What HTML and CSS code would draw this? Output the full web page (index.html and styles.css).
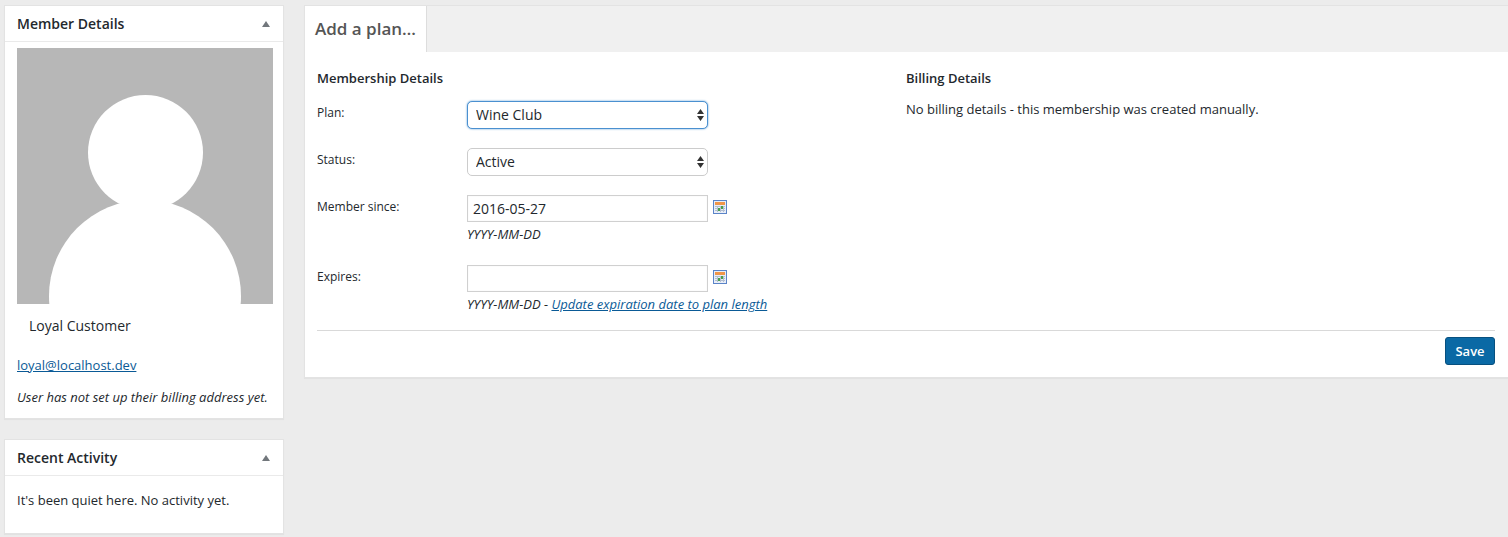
FILE: index.html
```html
<!DOCTYPE html>
<html lang="en">
<head>
<meta charset="utf-8">
<title>Add a plan</title>
<link rel="stylesheet" href="styles.css">
</head>
<body>
<div class="page">
  <aside class="sidebar">
    <section class="card member">
      <header class="card-head"><h2>Member Details</h2><span class="caret"></span></header>
      <div class="card-body">
        <svg class="avatar" width="256" height="256" viewBox="0 0 256 256"><rect width="256" height="256" fill="#b7b7b7"/><circle cx="128.500" cy="104.500" r="57.500" fill="#fff"/><circle cx="128" cy="248" r="96" fill="#fff"/></svg>
        <p class="name">Loyal Customer</p>
        <p class="email"><a href="#">loyal@localhost.dev</a></p>
        <p class="note">User has not set up their billing address yet.</p>
      </div>
    </section>
    <section class="card activity">
      <header class="card-head"><h2>Recent Activity</h2><span class="caret"></span></header>
      <div class="card-body"><p class="quiet">It's been quiet here. No activity yet.</p></div>
    </section>
  </aside>
  <main class="panel">
    <div class="tabs"><h1 class="tab">Add a plan…</h1></div>
    <div class="panel-body">
      <div class="columns">
        <div class="col-details">
          <h3>Membership Details</h3>
          <div class="row row-plan">
            <label>Plan:</label>
            <div class="select-wrap">
              <select class="select focus"><option>Wine Club</option></select>
              <svg class="arrows" width="7" height="12" viewBox="0 0 7 12"><path d="M3.500 0 7 5H0zM0 7h7l-3.500 5z" fill="#333"/></svg>
            </div>
          </div>
          <div class="row row-status">
            <label>Status:</label>
            <div class="select-wrap">
              <select class="select"><option>Active</option></select>
              <svg class="arrows" width="7" height="12" viewBox="0 0 7 12"><path d="M3.500 0 7 5H0zM0 7h7l-3.500 5z" fill="#333"/></svg>
            </div>
          </div>
          <div class="row row-date">
            <label>Member since:</label>
            <div>
              <div class="date-line">
                <input class="date" type="text" value="2016-05-27">
                <svg class="cal" width="14" height="14" viewBox="0 0 14 14"><rect x=".5" y=".5" width="13" height="13" fill="#e8eef8" stroke="#5b84c8"/><rect x="2" y="2" width="10" height="3" fill="#f0964a"/><path d="M2 6h10v1H2zM2 8h10v1H2zM2 10h10v1H2zM4 6h1v6H4zM7 6h1v6H7zM10 6h1v6h-1z" fill="#b4bfd0"/><rect x="5" y="8" width="2" height="3" fill="#4ba04b"/><rect x="8" y="6" width="2" height="3" fill="#4ba04b"/></svg>
              </div>
              <p class="hint">YYYY-MM-DD</p>
            </div>
          </div>
          <div class="row row-expires">
            <label>Expires:</label>
            <div>
              <div class="date-line">
                <input class="date" type="text" value="">
                <svg class="cal" width="14" height="14" viewBox="0 0 14 14"><rect x=".5" y=".5" width="13" height="13" fill="#e8eef8" stroke="#5b84c8"/><rect x="2" y="2" width="10" height="3" fill="#f0964a"/><path d="M2 6h10v1H2zM2 8h10v1H2zM2 10h10v1H2zM4 6h1v6H4zM7 6h1v6H7zM10 6h1v6h-1z" fill="#b4bfd0"/><rect x="5" y="8" width="2" height="3" fill="#4ba04b"/><rect x="8" y="6" width="2" height="3" fill="#4ba04b"/></svg>
              </div>
              <p class="hint">YYYY-MM-DD - <a href="#">Update expiration date to plan length</a></p>
            </div>
          </div>
        </div>
        <div class="col-billing">
          <h3>Billing Details</h3>
          <p class="billing-text">No billing details - this membership was created manually.</p>
        </div>
      </div>
      <div class="actions"><button class="save" type="button">Save</button></div>
    </div>
  </main>
</div>
</body>
</html>
```
FILE: styles.css
```css
* { box-sizing: border-box; }
html, body { margin: 0; padding: 0; }
body {
  background: #ececec;
  color: #23282d;
  font-family: "Open Sans", sans-serif;
  font-size: 13px;
  line-height: 18px;
  height: 537px;
  overflow: hidden;
}
h1, h2, h3, p { margin: 0; }
a { color: #0a5a96; }
.page { display: flex; align-items: flex-start; padding: 5px 0 0 4px; gap: 20px; }
.sidebar { width: 280px; flex: none; display: flex; flex-direction: column; gap: 20px; }
.card { background: #fff; border: 1px solid #e3e3e3; box-shadow: 0 1px 1px rgba(0,0,0,.04); }
.member { height: 414px; }
.activity { height: 95px; }
.card-head {
  height: 36px;
  border-bottom: 1px solid #eaeaea;
  padding: 0 12px;
  display: flex;
  align-items: center;
  justify-content: space-between;
}
.card-head h2 { font-size: 14px; font-weight: 600; color: #23282d; line-height: 36px; }
.caret {
  width: 0; height: 0;
  border-left: 4px solid transparent;
  border-right: 4px solid transparent;
  border-bottom: 6px solid #72777c;
  margin-right: 1px;
}
.card-body { padding: 6px 12px 0; }
.avatar { display: block; }
.name { font-size: 14px; line-height: 20px; margin-top: 12px; padding-left: 12px; color: #23282d; }
.email { margin-top: 20px; }
.note { margin-top: 14px; font-style: italic; font-size: 13px; white-space: nowrap; }
.quiet { margin-top: 9px; }
.panel { flex: 1; min-width: 0; height: 373px; background: #fff; border: 1px solid #e3e3e3; border-right: 0; box-shadow: 0 1px 1px rgba(0,0,0,.04); }
.tabs { background: #f0f0f0; height: 46px; display: flex; }
.tab {
  width: 122px;
  height: 46px;
  background: #fff;
  border-right: 1px solid #ddd;
  color: #555;
  font-size: 17px;
  font-weight: 600;
  line-height: 46px;
  padding-left: 10px;
}
.panel-body { padding: 0 13px 0 12px; }
.columns { display: flex; height: 278px; }
.col-details { width: 589px; flex: none; padding-top: 17px; }
.col-billing { padding-top: 17px; }
h3 { font-size: 13px; font-weight: 600; line-height: 18px; color: #23282d; }
.row { display: flex; }
.row label { width: 150px; flex: none; font-size: 12px; line-height: 18px; padding-top: 3px; }
.row-plan { margin-top: 14px; }
.row-status { margin-top: 19px; }
.row-date { margin-top: 19px; }
.row-expires { margin-top: 22px; }
.select-wrap { position: relative; width: 241px; height: 28px; }
.select {
  appearance: none;
  -webkit-appearance: none;
  display: block;
  width: 241px;
  height: 28px;
  background: #fff;
  border: 1px solid #ccc;
  border-radius: 5px;
  padding: 0 8px 2px;
  font: 14px "Open Sans", sans-serif;
  color: #23282d;
}
.focus { border-color: #4a90d0; box-shadow: 0 0 2px rgba(30,120,200,.8); }
.arrows { position: absolute; right: 4px; top: 8px; }
.date-line { display: flex; align-items: flex-start; gap: 5px; }
.date {
  width: 241px;
  height: 27px;
  border: 1px solid #d0d0d0;
  border-radius: 0;
  padding: 0 5px;
  background: #fff;
  font: 14px "Open Sans", sans-serif;
  color: #23282d;
  box-shadow: inset 0 0 1px rgba(0,0,0,.12);
}
.cal { margin-top: 5px; }
.hint { font-style: italic; font-size: 13px; line-height: 18px; margin-top: 3px; }
.billing-text { margin-top: 13px; }
.actions { border-top: 1px solid #d9d9d9; padding-top: 6px; display: flex; justify-content: flex-end; }
.save {
  width: 50px;
  height: 28px;
  background: #0a69a5;
  border: 1px solid #07507f;
  border-radius: 3px;
  color: #fff;
  font: 600 13px "Open Sans", sans-serif;
  padding: 0;
}
```
